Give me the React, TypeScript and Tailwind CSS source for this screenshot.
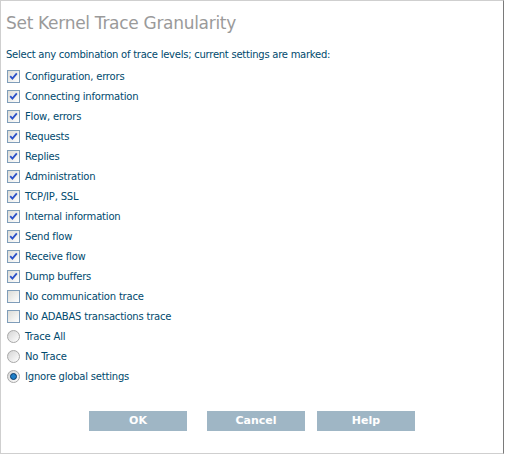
import React from "react";

const checks = [
  { label: "Configuration, errors", on: true },
  { label: "Connecting information", on: true },
  { label: "Flow, errors", on: true },
  { label: "Requests", on: true },
  { label: "Replies", on: true },
  { label: "Administration", on: true },
  { label: "TCP/IP, SSL", on: true },
  { label: "Internal information", on: true },
  { label: "Send flow", on: true },
  { label: "Receive flow", on: true },
  { label: "Dump buffers", on: true },
  { label: "No communication trace", on: false },
  { label: "No ADABAS transactions trace", on: false },
];

const radios = [
  { label: "Trace All", on: false },
  { label: "No Trace", on: false },
  { label: "Ignore global settings", on: true },
];

const CheckBox = ({ on }: { on: boolean }) => (
  <span className="flex h-[13px] w-[13px] items-center justify-center border border-[#7f9db9] bg-gradient-to-br from-[#dcdcd7] to-[#ffffff]">
    {on ? (
      <svg width="9" height="9" viewBox="0 0 9 9">
        <path d="M1.2 4.2 L3.4 6.6 L7.8 1.4" fill="none" stroke="#2b50c8" strokeWidth="1.8" />
      </svg>
    ) : null}
  </span>
);

const Radio = ({ on }: { on: boolean }) => (
  <span className="flex h-[13px] w-[13px] items-center justify-center rounded-full border border-[#a8a8a8] bg-gradient-to-br from-[#d4d4d4] to-[#ffffff]">
    {on ? <span className="h-[7px] w-[7px] rounded-full border border-[#0a3a6a] bg-[#1f7fc8]" /> : null}
  </span>
);

export default function App() {
  return (
    <div className="h-[455px] w-[505px] bg-white">
      <div
        className="flex h-[454px] w-[504px] flex-col border-t border-l border-b border-r border-[#cfcfcf] border-r-[#7a7a7a] text-[10px] text-[#004a6e]"
        style={{ fontFamily: "'DejaVu Sans', Verdana, sans-serif" }}
      >
        <h1 className="pl-[5px] pt-[10px] text-[17px] leading-[24px] tracking-[-0.3px] text-[#9a9a9a]">
          Set Kernel Trace Granularity
        </h1>
        <p className="mt-[10px] h-5 pl-[5px] leading-5 tracking-[-0.25px]">
          Select any combination of trace levels; current settings are marked:
        </p>
        <div className="mt-[1px] flex flex-col">
          {checks.map((c) => (
            <label key={c.label} className="flex h-5 items-center gap-[5px] pl-[6px] tracking-[-0.2px]">
              <CheckBox on={c.on} />
              <span>{c.label}</span>
            </label>
          ))}
          {radios.map((r) => (
            <label key={r.label} className="flex h-5 items-center gap-[5px] pl-[6px] tracking-[-0.2px]">
              <Radio on={r.on} />
              <span>{r.label}</span>
            </label>
          ))}
        </div>
        <div className="mt-[25px] flex pl-[88px]">
          <button className="h-5 w-[98px] bg-[#9fb6c5] text-[11px] font-bold text-white">OK</button>
          <button className="ml-5 h-5 w-[98px] bg-[#9fb6c5] text-[11px] font-bold text-white">Cancel</button>
          <button className="ml-3 h-5 w-[98px] bg-[#9fb6c5] text-[11px] font-bold text-white">Help</button>
        </div>
      </div>
    </div>
  );
}
